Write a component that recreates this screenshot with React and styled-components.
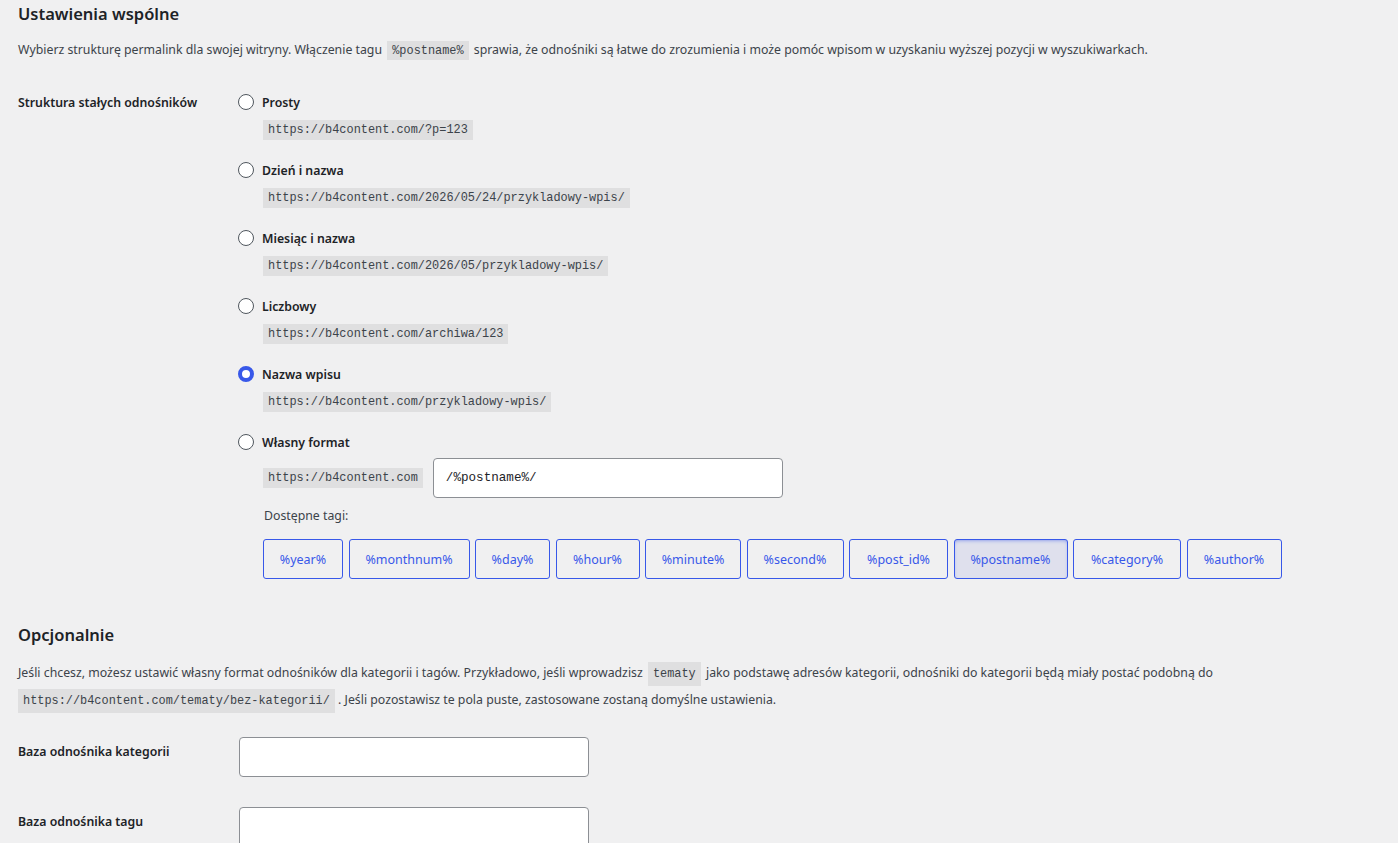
import React from "react";
import styled, { createGlobalStyle } from "styled-components";

const Global = createGlobalStyle`
  html, body { margin: 0; padding: 0; background: #f0f0f1; }
  body {
    font-family: "Segoe UI", "Noto Sans", "Liberation Sans", sans-serif;
    font-size: 12.3px;
    color: #3c434a;
  }
`;

const Page = styled.div`
  padding: 2px 20px 0 18px;
  display: flex;
  flex-direction: column;
`;

const Heading = styled.h2`
  margin: ${(p) => p.$mt || 0}px 0 0;
  height: 24px;
  line-height: 24px;
  font-size: 16.5px;
  font-weight: 600;
  color: #1d2327;
`;

const Desc = styled.p`
  margin: ${(p) => p.$mt || 0}px 0 0;
  line-height: ${(p) => p.$lh || 20}px;
  color: #3c434a;
`;

const Code = styled.code`
  font-family: "Liberation Mono", "DejaVu Sans Mono", monospace;
  font-size: 11.9px;
  background: rgba(0, 0, 0, 0.07);
  color: #3c434a;
  padding: ${(p) => (p.$tall ? "5px 5px 5px" : "3px 5px 2px")};
  margin: 0 ${(p) => (p.$inline ? 2 : 0)}px;
`;

const BlockCode = styled(Code)`
  display: inline-block;
  height: 20px;
  line-height: 20px;
  padding: 0 5px;
  align-self: ${(p) => (p.$center ? "center" : "flex-start")};
`;

const Row = styled.div`
  display: grid;
  grid-template-columns: 220px 1fr;
  margin-top: ${(p) => p.$mt || 0}px;
`;

const RowLabel = styled.div`
  font-weight: 600;
  color: #1d2327;
  line-height: 24px;
  padding-top: ${(p) => p.$pt || 0}px;
`;

const Options = styled.div`
  display: flex;
  flex-direction: column;
  gap: 18px;
`;

const Option = styled.div`
  display: flex;
  flex-direction: column;
  gap: ${(p) => p.$gap ?? 6}px;
`;

const RadioLine = styled.label`
  display: flex;
  align-items: center;
  gap: 8px;
  height: 24px;
  font-weight: 600;
  color: #1d2327;
`;

const Radio = styled.span`
  box-sizing: border-box;
  width: 16px;
  height: 16px;
  border-radius: 50%;
  background: #fff;
  border: ${(p) => (p.$checked ? "4.5px solid #3858e9" : "1px solid #50575e")};
  flex: none;
`;

const Indent = styled.div`
  padding-left: 25px;
  display: flex;
  flex-direction: column;
`;

const CustomLine = styled.div`
  display: flex;
  align-items: center;
  gap: 10px;
`;

const TextInput = styled.div`
  box-sizing: border-box;
  width: 350px;
  height: 40px;
  background: #fff;
  border: 1px solid #8c8f94;
  border-radius: 4px;
  display: flex;
  align-items: center;
  padding: 0 12px;
  font-family: "Liberation Mono", "DejaVu Sans Mono", monospace;
  font-size: 12.6px;
  color: #1d2327;
`;

const TagsCaption = styled.div`
  margin-top: 8px;
  line-height: 20px;
  color: #3c434a;
  padding-left: 1px;
`;

const Tags = styled.div`
  margin-top: 13px;
  display: flex;
  gap: 5.5px;
`;

const TagButton = styled.button`
  box-sizing: border-box;
  height: 40px;
  padding: 0;
  font-family: inherit;
  font-size: 12.5px;
  color: #3858e9;
  border: 1px solid #3858e9;
  border-radius: 3px;
  background: ${(p) => (p.$active ? "#dfe0ed" : "#f0f0f1")};
  box-shadow: ${(p) => (p.$active ? "inset 0 2px 5px -3px #3858e9" : "none")};
  cursor: pointer;
`;

const FieldInput = styled.div`
  box-sizing: border-box;
  width: 350px;
  height: 40px;
  background: #fff;
  border: 1px solid #8c8f94;
  border-radius: 4px;
`;

const FieldRow = styled.div`
  display: grid;
  grid-template-columns: 221px 1fr;
  margin-top: ${(p) => p.$mt}px;
`;

const options = [
  { name: "Prosty", url: "https://b4content.com/?p=123" },
  { name: "Dzień i nazwa", url: "https://b4content.com/2026/05/24/przykladowy-wpis/" },
  { name: "Miesiąc i nazwa", url: "https://b4content.com/2026/05/przykladowy-wpis/" },
  { name: "Liczbowy", url: "https://b4content.com/archiwa/123" },
  { name: "Nazwa wpisu", url: "https://b4content.com/przykladowy-wpis/", checked: true },
];

const tags = [
  ["%year%", 80],
  ["%monthnum%", 121],
  ["%day%", 75],
  ["%hour%", 84],
  ["%minute%", 96],
  ["%second%", 97],
  ["%post_id%", 99],
  ["%postname%", 114, true],
  ["%category%", 108],
  ["%author%", 95],
];

export default function App() {
  return (
    <>
      <Global />
      <Page>
        <Heading>Ustawienia wspólne</Heading>
        <Desc $mt={14}>
          Wybierz strukturę permalink dla swojej witryny. Włączenie tagu{" "}
          <Code $inline>%postname%</Code> sprawia, że odnośniki są łatwe do zrozumienia i może pomóc wpisom w uzyskaniu wyższej pozycji w wyszukiwarkach.
        </Desc>

        <Row $mt={29}>
          <RowLabel $pt={1}>Struktura stałych odnośników</RowLabel>
          <Options>
            {options.map((o) => (
              <Option key={o.name}>
                <RadioLine>
                  <Radio $checked={o.checked} />
                  {o.name}
                </RadioLine>
                <Indent>
                  <BlockCode>{o.url}</BlockCode>
                </Indent>
              </Option>
            ))}
            <Option $gap={4}>
              <RadioLine>
                <Radio />
                Własny format
              </RadioLine>
              <Indent>
                <CustomLine>
                  <BlockCode $center>https://b4content.com</BlockCode>
                  <TextInput>/%postname%/</TextInput>
                </CustomLine>
                <TagsCaption>Dostępne tagi:</TagsCaption>
                <Tags>
                  {tags.map(([t, w, active]) => (
                    <TagButton key={t} $active={active} style={{ width: w }}>
                      {t}
                    </TagButton>
                  ))}
                </Tags>
              </Indent>
            </Option>
          </Options>
        </Row>

        <Heading $mt={44}>Opcjonalnie</Heading>
        <Desc $mt={13} $lh={25}>
          Jeśli chcesz, możesz ustawić własny format odnośników dla kategorii i tagów. Przykładowo, jeśli wprowadzisz{" "}
          <Code $inline $tall>tematy</Code> jako podstawę adresów kategorii, odnośniki do kategorii będą miały postać podobną do{" "}
          <br />
          <Code $tall>https://b4content.com/tematy/bez-kategorii/</Code> . Jeśli pozostawisz te pola puste, zastosowane zostaną domyślne ustawienia.
        </Desc>

        <FieldRow $mt={23}>
          <RowLabel $pt={3}>Baza odnośnika kategorii</RowLabel>
          <FieldInput />
        </FieldRow>
        <FieldRow $mt={30}>
          <RowLabel $pt={3}>Baza odnośnika tagu</RowLabel>
          <FieldInput />
        </FieldRow>
      </Page>
    </>
  );
}
